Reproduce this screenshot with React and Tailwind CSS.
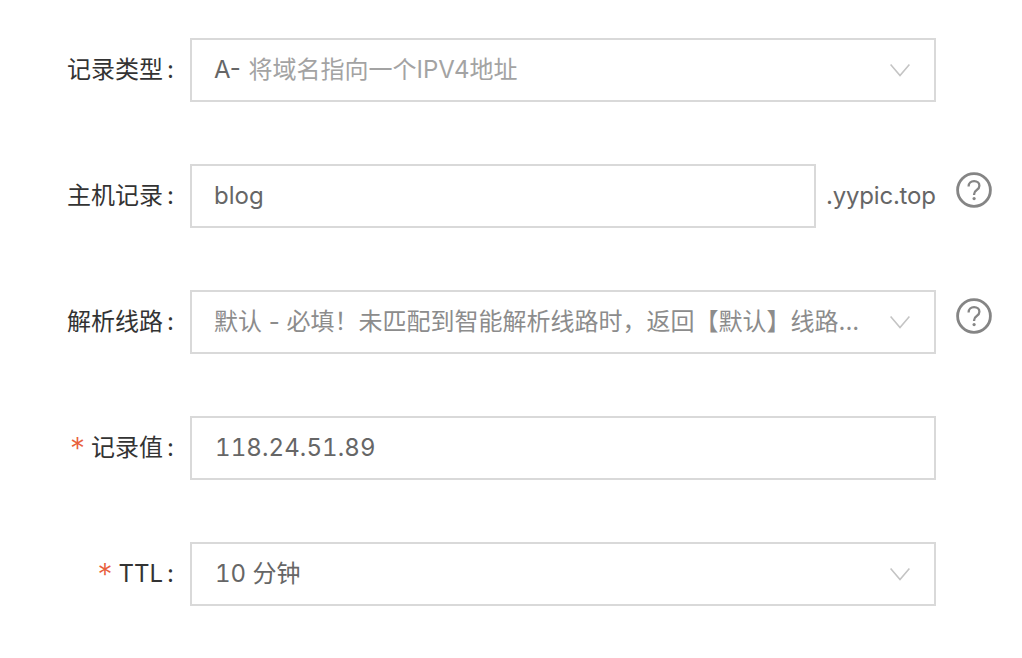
const FONT = "font-['Inter','Noto_Sans_CJK_SC',sans-serif]"

function Chevron() {
  return (
    <svg width="20" height="14" viewBox="0 0 20 14" fill="none" className="shrink-0">
      <path d="M0.6 1.5 L10 12.5 L19.4 1.5" stroke="#c4c4c4" strokeWidth="1.6" />
    </svg>
  )
}

function Help() {
  return (
    <svg width="36" height="36" viewBox="0 0 36 36" fill="none">
      <circle cx="18" cy="18" r="16.4" stroke="#858585" strokeWidth="2.8" />
      <path d="M12.6 14.4c0-3.2 2.4-5.2 5.5-5.2 3 0 5.3 1.9 5.3 4.6 0 2-1 3.1-2.7 4.2-1.8 1.2-2.6 2.1-2.6 4.2v.8" stroke="#858585" strokeWidth="2.3" />
      <circle cx="18.1" cy="26.6" r="1.6" fill="#858585" />
    </svg>
  )
}

function Row({ label, required, children, help, last }) {
  return (
    <div className={`flex h-16 ${last ? '' : 'mb-[62px]'}`}>
      <div className="w-[190px] shrink-0 h-16 flex items-center justify-end pr-[16px] text-[24px] text-[#333]">
        {required && <span className="text-[#e8603c] mr-[6px] text-[30px] font-light leading-none">*</span>}
        <span>{label}</span>
        <span className="ml-[4px]">:</span>
      </div>
      {children}
      {help && <div className="ml-5 mt-[8px]"><Help /></div>}
    </div>
  )
}

function Box({ children, chevron, width = 'w-[746px]' }) {
  return (
    <div className={`${width} h-16 shrink-0 border-2 border-[#d9d9d9] bg-white flex items-center justify-between pl-[22px] pr-[24px] text-[24px] text-[#666]`}>
      <div className="truncate">{children}</div>
      {chevron && <Chevron />}
    </div>
  )
}

export default function App() {
  return (
    <div className={`${FONT} w-[1022px] h-[658px] bg-white pt-[38px] overflow-hidden`}>
      <Row label="记录类型">
        <Box chevron>
          <span className="mr-px">A- </span><span className="text-[#a3a3a3]">将域名指向一个IPV4地址</span>
        </Box>
      </Row>
      <Row label="主机记录" help>
        <Box width="w-[626px]">blog</Box>
        <div className="w-[120px] shrink-0 pl-[10px] flex items-center text-[24px] text-[#666] tracking-[-0.2px] whitespace-nowrap">.yypic.top</div>
      </Row>
      <Row label="解析线路" help>
        <Box chevron>
          <span className="text-[#8c8c8c]">默认 - 必填！未匹配到智能解析线路时，返回【默认】线路...</span>
        </Box>
      </Row>
      <Row label="记录值" required>
        <Box><span className="tabular-nums tracking-[0.1px] pl-px">118.24.51.89</span></Box>
      </Row>
      <Row label="TTL" required last>
        <Box chevron><span className="tabular-nums pl-px">10 分钟</span></Box>
      </Row>
    </div>
  )
}
